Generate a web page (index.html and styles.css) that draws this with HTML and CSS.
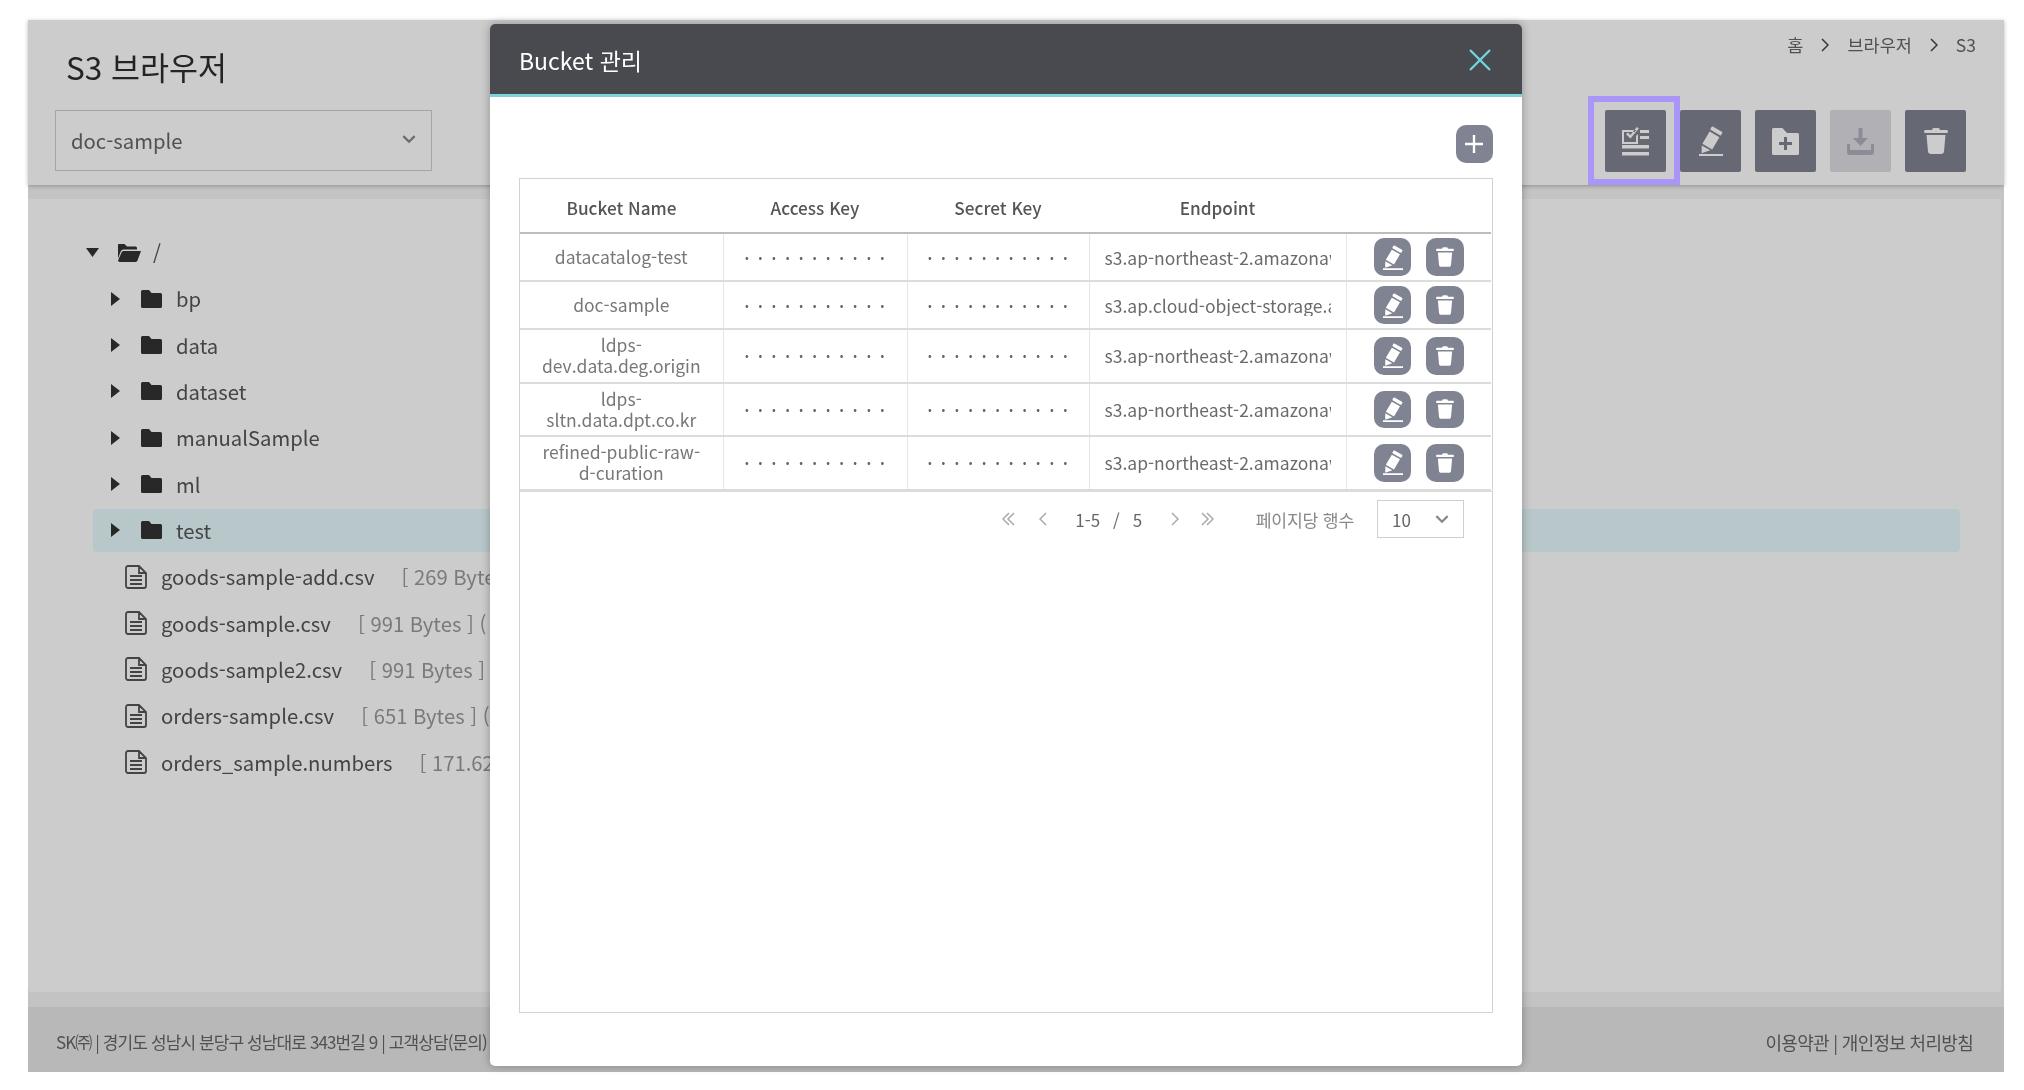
FILE: index.html
```html
<!DOCTYPE html>
<html lang="ko">
<head>
<meta charset="utf-8">
<title>S3 브라우저</title>
<link rel="stylesheet" href="styles.css">
</head>
<body>
<svg class="sprite" aria-hidden="true">
  <symbol id="i-pencil" viewBox="0 0 24 30"><path d="M13.8 .6l9 5.2a1 1 0 0 1 .4 1.3l-1 1.8a1 1 0 0 1-1.3.4l-9-5.2a1 1 0 0 1-.4-1.3l1-1.8a1 1 0 0 1 1.3-.4zM10.6 5.6l9.8 5.6-7.2 12.2-9.8-5.6zM2.8 19.4l8.4 4.9-8.6 2.9zM0 28h24v2H0z"/></symbol>
  <symbol id="i-trash" viewBox="0 0 24 26"><path d="M8 2a2 2 0 0 1 2-2h4a2 2 0 0 1 2 2h6.500a1.500 1.500 0 0 1 0 3H1.500a1.500 1.500 0 0 1 0-3zM2.500 7h19l-1.400 15.500a3.500 3.500 0 0 1-3.500 3.500H7.400a3.500 3.500 0 0 1-3.500-3.500z"/></symbol>
  <symbol id="i-folder-plus" viewBox="0 0 27 27"><path fill-rule="evenodd" d="M1.500 0h8.800l4.700 5h10.500a1.500 1.500 0 0 1 1.500 1.500v19a1.500 1.500 0 0 1-1.500 1.500h-24a1.500 1.500 0 0 1-1.500-1.500v-24a1.500 1.500 0 0 1 1.500-1.500zM12 9v5H7v3h5v5h3v-5h5v-3h-5V9z"/></symbol>
  <symbol id="i-download" viewBox="0 0 27 27"><path d="M11.500 0h4v10h5.500l-7.500 8-7.500-8h5.500zM0 16h3v6h21v-6h3v8a3 3 0 0 1-3 3H3a3 3 0 0 1-3-3z"/></symbol>
  <symbol id="i-checklist" viewBox="0 0 27 29"><path fill-rule="evenodd" d="M0 3h14.500l-2 2H2v10h12v-6l2-2v10H0zM14.800 0l2 1.600-8.300 9.900-4.500-4.200 1.700-1.800 2.700 2.500zM18 3h9v3h-9zM18 9h9v3h-9zM0 18h27v3.500H0zM0 25h27v3.500H0z"/></symbol>
  <symbol id="i-plus" viewBox="0 0 18 18"><path d="M7.800 0h2.400v7.800H18v2.400h-7.800V18H7.800v-7.800H0V7.800h7.800z"/></symbol>
  <symbol id="i-folder" viewBox="0 0 21 18"><path d="M1.500 0h6.500l2.500 3h9a1.500 1.500 0 0 1 1.500 1.500v12a1.500 1.500 0 0 1-1.500 1.500h-18a1.500 1.500 0 0 1-1.500-1.500v-15a1.500 1.500 0 0 1 1.500-1.500z"/></symbol>
  <symbol id="i-folder-open" viewBox="0 0 24 18"><path d="M1.500 0h6l2.500 2.500h8.500a1.500 1.500 0 0 1 1.500 1.500v1.500H6.500a3 3 0 0 0-2.800 2L1 14.500V1.500A1.500 1.500 0 0 1 1.500 0zM6.500 7H24l-3.500 9.500a2 2 0 0 1-2 1.500H2.500a1.500 1.500 0 0 1-1.200-2L4.500 8.500A2 2 0 0 1 6.500 7z"/></symbol>
  <symbol id="i-file" viewBox="0 0 22 24"><path fill="none" stroke="currentColor" stroke-width="1.800" d="M3 1h11l7 7v13a2 2 0 0 1-2 2H3a2 2 0 0 1-2-2V3a2 2 0 0 1 2-2zM14 1v7h7M5 11h12M5 15h12M5 19h12"/></symbol>
  <symbol id="i-tri-r" viewBox="0 0 9 14"><path d="M0 0l9 7-9 7z"/></symbol>
  <symbol id="i-tri-d" viewBox="0 0 13 9"><path d="M0 0h13L6.500 9z"/></symbol>
  <symbol id="i-chev-d" viewBox="0 0 12 8"><path fill="none" stroke="currentColor" stroke-width="2" d="M1 1l5 5 5-5"/></symbol>
  <symbol id="i-chev-l" viewBox="0 0 8 14"><path fill="none" stroke="currentColor" stroke-width="1.500" d="M7 1L1 7l6 6"/></symbol>
  <symbol id="i-chev-r" viewBox="0 0 8 14"><path fill="none" stroke="currentColor" stroke-width="1.500" d="M1 1l6 6-6 6"/></symbol>
  <symbol id="i-dbl-l" viewBox="0 0 13 14"><path fill="none" stroke="currentColor" stroke-width="1.500" d="M7 1L1 7l6 6M12 1L6 7l6 6"/></symbol>
  <symbol id="i-dbl-r" viewBox="0 0 13 14"><path fill="none" stroke="currentColor" stroke-width="1.500" d="M1 1l6 6-6 6M6 1l6 6-6 6"/></symbol>
  <symbol id="i-close" viewBox="0 0 22 22"><path fill="none" stroke="currentColor" stroke-width="2.400" d="M1 1l20 20M21 1L1 21"/></symbol>
</svg>

<div class="page">
  <header class="top">
    <div class="top-left">
      <h1 class="title">S3 브라우저</h1>
      <div class="select bucket-select"><span>doc-sample</span><svg class="chev"><use href="#i-chev-d"/></svg></div>
    </div>
    <div class="top-right">
      <nav class="crumbs"><span>홈</span><svg class="crumb-sep"><use href="#i-chev-r"/></svg><span>브라우저</span><svg class="crumb-sep"><use href="#i-chev-r"/></svg><span>S3</span></nav>
      <div class="tools">
        <button class="tool"><svg class="ic-check"><use href="#i-checklist"/></svg></button>
        <button class="tool"><svg class="ic-pencil"><use href="#i-pencil"/></svg></button>
        <button class="tool"><svg class="ic-fplus"><use href="#i-folder-plus"/></svg></button>
        <button class="tool off"><svg class="ic-down"><use href="#i-download"/></svg></button>
        <button class="tool"><svg class="ic-trash"><use href="#i-trash"/></svg></button>
      </div>
    </div>
  </header>

  <main class="main">
    <ul class="tree">
      <li class="row root"><svg class="tri-d"><use href="#i-tri-d"/></svg><svg class="fold-open"><use href="#i-folder-open"/></svg><span>/</span></li>
      <li class="row dir"><svg class="tri"><use href="#i-tri-r"/></svg><svg class="fold"><use href="#i-folder"/></svg><span>bp</span></li>
      <li class="row dir"><svg class="tri"><use href="#i-tri-r"/></svg><svg class="fold"><use href="#i-folder"/></svg><span>data</span></li>
      <li class="row dir"><svg class="tri"><use href="#i-tri-r"/></svg><svg class="fold"><use href="#i-folder"/></svg><span>dataset</span></li>
      <li class="row dir"><svg class="tri"><use href="#i-tri-r"/></svg><svg class="fold"><use href="#i-folder"/></svg><span>manualSample</span></li>
      <li class="row dir"><svg class="tri"><use href="#i-tri-r"/></svg><svg class="fold"><use href="#i-folder"/></svg><span>ml</span></li>
      <li class="row dir active"><svg class="tri"><use href="#i-tri-r"/></svg><svg class="fold"><use href="#i-folder"/></svg><span>test</span></li>
      <li class="row file"><svg class="doc"><use href="#i-file"/></svg><span>goods-sample-add.csv</span><em>[ 269 Bytes ]</em></li>
      <li class="row file"><svg class="doc"><use href="#i-file"/></svg><span>goods-sample.csv</span><em>[ 991 Bytes ] (</em></li>
      <li class="row file"><svg class="doc"><use href="#i-file"/></svg><span>goods-sample2.csv</span><em>[ 991 Bytes ]</em></li>
      <li class="row file"><svg class="doc"><use href="#i-file"/></svg><span>orders-sample.csv</span><em>[ 651 Bytes ] (</em></li>
      <li class="row file"><svg class="doc"><use href="#i-file"/></svg><span>orders_sample.numbers</span><em>[ 171.62 KB ]</em></li>
    </ul>
  </main>

  <div class="foot-band"></div>
  <footer class="foot">
    <span class="foot-addr">SK㈜ | 경기도 성남시 분당구 성남대로 343번길 9 | 고객상담(문의)</span>
    <span class="foot-links">이용약관 | 개인정보 처리방침</span>
  </footer>

  <div class="scrim"></div>
  <div class="mark"></div>

  <section class="modal">
    <div class="modal-head"><h2>Bucket 관리</h2><svg class="close"><use href="#i-close"/></svg></div>
    <div class="modal-body">
      <div class="add-row"><button class="round"><svg class="ic-plus"><use href="#i-plus"/></svg></button></div>
      <div class="grid-box">
        <table class="grid">
          <colgroup><col class="c1"><col class="c2"><col class="c3"><col class="c4"><col class="c5"></colgroup>
          <thead><tr><th>Bucket Name</th><th>Access Key</th><th>Secret Key</th><th>Endpoint</th><th></th></tr></thead>
          <tbody>
            <tr class="r1"><td class="name">datacatalog-test</td><td class="pw">•••••••••••</td><td class="pw">•••••••••••</td><td><div class="ep">s3.ap-northeast-2.amazonaws.com</div></td><td><div class="acts"><button class="round"><svg class="ic-rp"><use href="#i-pencil"/></svg></button><button class="round"><svg class="ic-rt"><use href="#i-trash"/></svg></button></div></td></tr>
            <tr class="r1"><td class="name">doc-sample</td><td class="pw">•••••••••••</td><td class="pw">•••••••••••</td><td><div class="ep">s3.ap.cloud-object-storage.appdomain.cloud</div></td><td><div class="acts"><button class="round"><svg class="ic-rp"><use href="#i-pencil"/></svg></button><button class="round"><svg class="ic-rt"><use href="#i-trash"/></svg></button></div></td></tr>
            <tr class="r2"><td class="name">ldps-<br>dev.data.deg.origin</td><td class="pw">•••••••••••</td><td class="pw">•••••••••••</td><td><div class="ep">s3.ap-northeast-2.amazonaws.com</div></td><td><div class="acts"><button class="round"><svg class="ic-rp"><use href="#i-pencil"/></svg></button><button class="round"><svg class="ic-rt"><use href="#i-trash"/></svg></button></div></td></tr>
            <tr class="r2"><td class="name">ldps-<br>sltn.data.dpt.co.kr</td><td class="pw">•••••••••••</td><td class="pw">•••••••••••</td><td><div class="ep">s3.ap-northeast-2.amazonaws.com</div></td><td><div class="acts"><button class="round"><svg class="ic-rp"><use href="#i-pencil"/></svg></button><button class="round"><svg class="ic-rt"><use href="#i-trash"/></svg></button></div></td></tr>
            <tr class="r2"><td class="name">refined-public-raw-<br>d-curation</td><td class="pw">•••••••••••</td><td class="pw">•••••••••••</td><td><div class="ep">s3.ap-northeast-2.amazonaws.com</div></td><td><div class="acts"><button class="round"><svg class="ic-rp"><use href="#i-pencil"/></svg></button><button class="round"><svg class="ic-rt"><use href="#i-trash"/></svg></button></div></td></tr>
          </tbody>
        </table>
        <div class="pager">
          <svg class="pg-d"><use href="#i-dbl-l"/></svg>
          <svg class="pg-s"><use href="#i-chev-l"/></svg>
          <span class="pg-count"><span>1-5</span><span>/</span><span>5</span></span>
          <svg class="pg-s"><use href="#i-chev-r"/></svg>
          <svg class="pg-d"><use href="#i-dbl-r"/></svg>
          <span class="pg-label">페이지당 행수</span>
          <div class="select pg-select"><span>10</span><svg class="chev"><use href="#i-chev-d"/></svg></div>
        </div>
      </div>
    </div>
  </section>
</div>
</body>
</html>
```

FILE: styles.css
```css
* { box-sizing: border-box; }
html, body { margin: 0; padding: 0; background: #fff; }
body {
  width: 2024px;
  height: 1090px;
  overflow: hidden;
  padding: 20px 20px 18px 28px;
  font-family: "Noto Sans CJK KR", "Noto Sans", sans-serif;
  color: #555;
  filter: blur(.45px);
}
.sprite { position: absolute; width: 0; height: 0; }
svg { display: block; fill: currentColor; flex: none; }
button { border: 0; padding: 0; margin: 0; display: flex; align-items: center; justify-content: center; }
ul { list-style: none; margin: 0; padding: 0; }
h1, h2 { margin: 0; font-weight: 400; }

.page {
  position: relative;
  width: 1976px;
  height: 1052px;
  display: flex;
  flex-direction: column;
  background: #f5f5f5;
}

/* header */
.top {
  height: 165px;
  flex: none;
  display: flex;
  justify-content: space-between;
  padding: 0 38px 0 27px;
  background: #fff;
  box-shadow: 0 1px 4px rgba(0,0,0,.28);
  z-index: 1;
}
.top-left { display: flex; flex-direction: column; }
.title { font-size: 31.500px; line-height: 44px; color: #2e2e2e; margin: 24px 0 0 11px; }
.select {
  display: flex;
  align-items: center;
  justify-content: space-between;
  border: 1.500px solid #cfcfcf;
  background: #fff;
}
.bucket-select {
  width: 377px;
  height: 61px;
  margin-top: 22px;
  padding: 0 15px 2px;
  font-size: 20.300px;
  color: #666;
}
.chev { width: 14px; height: 9px; color: #888; }
.top-right { display: flex; flex-direction: column; align-items: flex-end; }
.crumbs {
  display: flex;
  align-items: center;
  font-size: 17.500px;
  line-height: 24px;
  color: #666;
  margin: 13px -10px 0 0;
  height: 24px;
}
.crumb-sep { width: 8px; height: 14px; margin: 0 18px; color: #444; }
.tools { display: flex; gap: 14px; margin-top: 53px; }
.tool {
  width: 61px;
  height: 62px;
  background: #808392;
  border-radius: 2px;
  color: #fff;
}
.tool.off { background: #dcdde3; color: #aeb0bb; }
.ic-check { width: 27px; height: 29px; }
.ic-pencil { width: 24px; height: 30px; }
.ic-fplus { width: 27px; height: 27px; }
.ic-down { width: 27px; height: 27px; }
.ic-trash { width: 24px; height: 26px; }

/* tree */
.main {
  flex: 1;
  margin: 14px 3px 0 0;
  background: #fff;
  padding: 32px 41px 0 52px;
  border-radius: 0 0 4px 4px;
}
.tree { display: flex; flex-direction: column; gap: 3.330px; }
.row {
  display: flex;
  align-items: center;
  height: 43px;
  font-size: 20.250px;
  color: #555;
  white-space: nowrap;
  border-radius: 4px;
}
.root { padding-left: 6px; }
.dir { margin-left: 13px; padding-left: 18px; }
.file { padding-left: 45px; }
.active { background: #e7fafd; }
.tri-d { width: 13px; height: 9px; margin-right: 18px; color: #333; }
.fold-open { width: 24px; height: 18px; margin-right: 12px; color: #333; }
.tri { width: 9px; height: 14px; margin-right: 21px; color: #333; }
.fold { width: 21px; height: 18px; margin-right: 14px; color: #333; }
.doc { width: 22px; height: 24px; margin-right: 14px; color: #555; }
.file em { font-style: normal; color: #999; margin-left: 27px; }

/* footer */
.foot-band { height: 15px; flex: none; background: #f4f4f4; }
.foot {
  height: 65px;
  flex: none;
  display: flex;
  align-items: center;
  justify-content: space-between;
  padding: 4px 31px 0 28px;
  background: #e6e6e6;
  color: #666;
}
.foot-addr { font-size: 17px; letter-spacing: -.9px; }
.foot-links { font-size: 18px; letter-spacing: -.7px; }

/* overlay */
.scrim { position: absolute; inset: 0; background: rgba(0,0,0,.2); z-index: 2; }
.mark {
  position: absolute;
  left: 1560px;
  top: 76px;
  width: 92px;
  height: 89px;
  border: 6px solid #aa96f8;
  z-index: 3;
}

/* modal */
.modal {
  position: absolute;
  left: 462px;
  top: 4px;
  width: 1032px;
  height: 1042px;
  display: flex;
  flex-direction: column;
  background: #fff;
  border-radius: 5px;
  overflow: hidden;
  box-shadow: 0 0 10px rgba(0,0,0,.3);
  z-index: 4;
}
.modal-head {
  height: 73px;
  flex: none;
  display: flex;
  align-items: center;
  justify-content: space-between;
  padding: 2px 31px 0 29px;
  background: #494a50;
  border-bottom: 3px solid #7dd3dc;
}
.modal-head h2 { font-size: 23px; color: #fff; }
.close { width: 22px; height: 22px; color: #6fd4de; }
.modal-body { flex: 1; padding: 0 29px 0 29px; display: flex; flex-direction: column; }
.add-row { display: flex; justify-content: flex-end; padding-top: 28px; height: 81px; flex: none; }
.round { width: 37.500px; height: 37.500px; border-radius: 10px; background: #808392; color: #fff; }
.ic-plus { width: 18px; height: 18px; }
.ic-rp { width: 20px; height: 25px; }
.ic-rt { width: 18px; height: 20px; }

.grid-box {
  height: 835px;
  border: 1.500px solid #d2d2d2;
  flex: none;
}
.grid {
  width: 971px;
  table-layout: fixed;
  border-collapse: collapse;
  font-size: 17.500px;
  line-height: 21px;
  color: #777;
}
.c1 { width: 203px; }
.c2 { width: 184px; }
.c3 { width: 182px; }
.c4 { width: 257px; }
.c5 { width: 145px; }
.grid th {
  height: 54px;
  font-size: 17.200px;
  font-weight: 500;
  color: #555;
  border-bottom: 2px solid #bdbdbd;
  padding: 3px 0 0;
}
.grid td {
  padding: 0;
  text-align: center;
  border-bottom: 2px solid #dcdcdc;
  border-right: 1.500px solid #e6e6e6;
}
.grid td:last-child { border-right: 0; }
.grid .name { padding-bottom: 1px; }
.r1 { height: 48px; }
.r2 { height: 53.500px; }
.grid .pw { font-size: 11px; letter-spacing: 9.800px; color: #666; padding-left: 9px; white-space: nowrap; overflow: hidden; }
.ep {
  margin: 0 15px 0 15px;
  overflow: hidden;
  white-space: nowrap;
  text-align: left;
  color: #6a6a6a;
}
.acts { display: flex; justify-content: center; gap: 15px; }

.pager {
  display: flex;
  align-items: center;
  justify-content: flex-end;
  height: 56px;
  padding-right: 28px;
  border-top: 1px solid #dcdcdc;
  font-size: 17px;
  color: #777;
  white-space: nowrap;
}
.pg-d { width: 13px; height: 14px; color: #aaa; margin: 0 24px 0 0; }
.pg-s { width: 8px; height: 14px; color: #aaa; margin: 0 22px 0 0; }
.pg-count { display: flex; gap: 13px; margin: 0 29px 0 6.500px; color: #666; }
.pg-label { font-size: 17.200px; margin-left: 17.500px; color: #888; letter-spacing: -.2px; }
.pg-select {
  width: 87px;
  height: 38px;
  margin-left: 23px;
  padding: 0 14px 0 14px;
  color: #666;
}
```
